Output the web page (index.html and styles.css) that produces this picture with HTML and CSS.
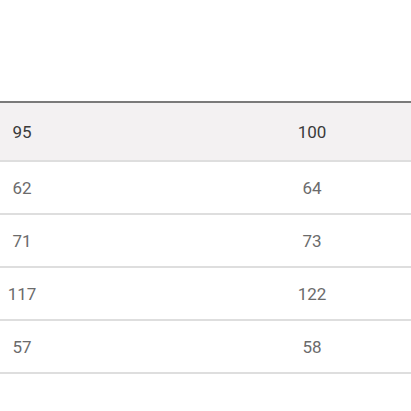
FILE: index.html
```html
<!DOCTYPE html>
<html>
<head>
<meta charset="utf-8">
<link rel="stylesheet" href="styles.css">
</head>
<body>
<div class="viewport">
  <div class="table">
    <div class="row head"><div class="cell">95</div><div class="cell">100</div><div class="cell"></div></div>
    <div class="row"><div class="cell">62</div><div class="cell">64</div><div class="cell"></div></div>
    <div class="row"><div class="cell">71</div><div class="cell">73</div><div class="cell"></div></div>
    <div class="row"><div class="cell">117</div><div class="cell">122</div><div class="cell"></div></div>
    <div class="row"><div class="cell">57</div><div class="cell">58</div><div class="cell"></div></div>
  </div>
</div>
</body>
</html>
```

FILE: styles.css
```css
html, body {
  margin: 0;
  padding: 0;
  background: #ffffff;
}
body {
  font-family: Roboto, "Liberation Sans", sans-serif;
  overflow: hidden;
}
.viewport {
  width: 411px;
  height: 411px;
  overflow: hidden;
  padding-top: 101px;
  box-sizing: border-box;
}
.table {
  margin-left: -123px;
  width: 870px;
  border-top: 2px solid #7a7a7a;
}
.row {
  display: grid;
  grid-template-columns: 290px 290px 290px;
  height: 51px;
  border-bottom: 2px solid #dedede;
  color: #6b6b6b;
  font-size: 17px;
}
.row.head {
  height: 57px;
  background: #f3f1f2;
  color: #3a3a3a;
}
.cell {
  display: flex;
  align-items: center;
  justify-content: center;
}
```
